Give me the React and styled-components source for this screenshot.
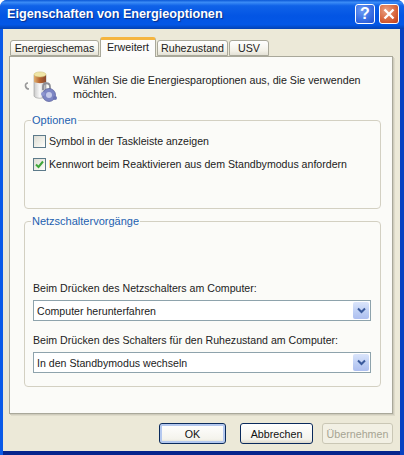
import React from 'react';
import styled, { createGlobalStyle } from 'styled-components';

const Global = createGlobalStyle`
  html, body { margin: 0; padding: 0; background: #fff; }
  * { box-sizing: border-box; }
`;
const Win = styled.div`
  width: 404px; height: 455px; display: flex; flex-direction: column; overflow: hidden;
  border-radius: 7px 7px 0 0;
  font-family: "Liberation Sans", Arial, sans-serif; font-size: 10.6px; color: #222;
  background: #0a4fd8;
`;
const TitleBar = styled.div`
  height: 29px; flex: none; display: flex; align-items: center; padding: 0 5px 1px 7px;
  background: linear-gradient(180deg, #0a57d6 0%, #3b8cf6 8%, #0f62e8 20%, #0355e4 55%, #0357e6 85%, #0342b4 100%);
`;
const Title = styled.div`
  flex: 1; color: #fff; font-weight: 700; font-size: 12.65px;
  text-shadow: 1px 1px 1px #0a2f8a;
`;
const CapButton = styled.div`
  width: 20px; height: 20px; margin-left: 4px; border: 1px solid #fff; border-radius: 3px;
  display: flex; align-items: center; justify-content: center;
  color: #fff; font-weight: 700; font-size: 16px;
  background: ${p => p.$close
    ? 'radial-gradient(circle at 35% 30%, #e9a184 0%, #d9673e 55%, #bf3c17 100%)'
    : 'radial-gradient(circle at 35% 30%, #6f9cf4 0%, #3a6fe4 55%, #2450cc 100%)'};
`;
const Outer = styled.div`
  flex: 1; display: flex; flex-direction: column; min-height: 0;
  background: linear-gradient(90deg, #0a5ae8 0 3px, transparent 3px), linear-gradient(270deg, #0842c2 0 4px, transparent 4px), linear-gradient(0deg, #06248c 0 4px, #0a4fd8 4px);
`;
const Body = styled.div`
  flex: 1; margin: 0 4px 4px 3px; background: #ece9d8; padding: 8px 7px 0 6px;
  display: flex; flex-direction: column;
`;
const TabRow = styled.div`
  display: flex; align-items: flex-end; height: 19px; padding-left: 1px; position: relative; z-index: 1;
`;
const Tab = styled.div`
  height: ${p => p.$active ? '20px' : '16px'};
  width: ${p => p.$w}px;
  margin-bottom: ${p => p.$active ? '-1px' : '0'};
  margin-right: 1px;
  display: flex; align-items: center; justify-content: center;
  font-size: 10.7px;
  padding-bottom: ${p => p.$active ? '3px' : '0'};
  border: 1px solid #a9a89a;
  border-bottom: ${p => p.$active ? '0' : '1px solid #a9a89a'};
  border-top: ${p => p.$active ? '3px solid #f5b53f' : '1px solid #a9a89a'};
  border-radius: 3px 3px 0 0;
  background: ${p => p.$active ? '#fcfcfb' : 'linear-gradient(180deg, #fff 0%, #f3f1e8 70%, #e4e2d6 100%)'};
`;
const Panel = styled.div`
  height: 358px; width: 384px; flex: none; background: #fbfbf8; border: 1px solid #a9a89a;
  box-shadow: 1px 1px 0 #cfccbd, 2px 2px 0 #dedbca;
  padding: 13px 11px 0 14px; display: flex; flex-direction: column;
`;
const Intro = styled.div`
  display: flex; gap: 15px; height: 40px; align-items: flex-start; margin-bottom: 4px;
`;
const IntroText = styled.div`
  font-size: 10.7px; line-height: 14px; padding-top: 3px; width: 300px;
`;
const Group = styled.fieldset`
  margin: 0; padding: 0 8px 0 8px; height: ${p => p.$h}px;
  margin-bottom: ${p => p.$mb || 0}px;
  border: 1px solid #d3d0c2; border-radius: 4px;
  min-width: 0;
`;
const Legend = styled.legend`
  padding: 0 1px; margin-left: -2px; font-size: 11px; color: #1d5fb0; line-height: 13px;
`;
const CheckRow = styled.div`
  display: flex; align-items: center; gap: 3px; height: 14px; margin-top: ${p => p.$mt}px;
`;
const Box = styled.div`
  width: 13px; height: 13px; border: 1px solid #5c7a8a; flex: none;
  background: linear-gradient(135deg, #dcdcd4 0%, #f4f4ee 70%, #fff 100%);
  display: flex; align-items: center; justify-content: center;
`;
const FieldLabel = styled.div`
  line-height: 13px; margin-top: ${p => p.$mt}px; margin-bottom: 5px;
`;
const Select = styled.div`
  width: 338px; height: 21px; border: 1px solid #8ea3ac; background: #fff;
  display: flex; align-items: center; justify-content: space-between;
  padding: 0 1px 0 3px;
`;
const Arrow = styled.div`
  width: 16px; height: 17px; border-radius: 2px;
  background: linear-gradient(180deg, #dbe5fb 0%, #bccdf4 60%, #aebff0 100%);
  display: flex; align-items: center; justify-content: center;
`;
const Footer = styled.div`
  flex: 1; display: flex; align-items: flex-start; justify-content: flex-end; padding-top: 9px;
`;
const Btn = styled.div`
  width: ${p => p.$w}px; height: 21px; margin-left: ${p => p.$ml}px;
  display: flex; align-items: center; justify-content: center; font-size: 10.7px;
  border: 1px solid ${p => p.$off ? '#cac7b5' : '#0a2a5c'}; border-radius: 3px;
  color: ${p => p.$off ? '#a6a493' : '#111'};
  background: ${p => p.$off ? '#f2f0e4' : 'linear-gradient(180deg, #fff 0%, #f4f3ec 80%, #dcd8ca 100%)'};
  box-shadow: ${p => p.$def ? 'inset 0 0 0 2px #b4c8ef' : 'none'};
`;

const Chevron = () => (
  <svg width="9" height="7" viewBox="0 0 9 7"><path d="M1 1.5 4.5 5 8 1.5" fill="none" stroke="#3a5a9c" strokeWidth="2" /></svg>
);

const PowerIcon = () => (
  <svg width="34" height="34" viewBox="0 0 34 34" style={{ flex: 'none', marginTop: -1 }}>
    <defs>
      <linearGradient id="can" x1="0" x2="1" y1="0" y2="0">
        <stop offset="0" stopColor="#c9c9c9" /><stop offset="0.5" stopColor="#fafafa" /><stop offset="1" stopColor="#a9a9b0" />
      </linearGradient>
      <linearGradient id="capTop" x1="0" x2="1" y1="0" y2="0">
        <stop offset="0" stopColor="#e0b070" /><stop offset="0.5" stopColor="#b5622f" /><stop offset="1" stopColor="#8a4a30" />
      </linearGradient>
    </defs>
    <path d="M4 14c-4 0-3 6 1 6" fill="none" stroke="#999" strokeWidth="1.6" />
    <path d="M10 6h12v21c-1 3-11 3-12 0z" fill="url(#can)" stroke="#999" strokeWidth=".6" />
    <path d="M10 6h12v7c-2 1.5-10 1.5-12 0z" fill="url(#capTop)" />
    <ellipse cx="16" cy="5.5" rx="6" ry="2.6" fill="#f0e6a8" stroke="#c9b96a" strokeWidth=".5" />
    <path d="M19 21v-3c0-5 7-5 7 0v3" fill="none" stroke="#8d8d95" strokeWidth="1.8" />
    <circle cx="25" cy="26" r="6.5" fill="#7d86c4" stroke="#555c98" strokeWidth=".7" />
    <circle cx="25" cy="26" r="3" fill="#c5cae9" />
    <circle cx="19" cy="25" r="2" fill="#8d95cf" />
    <circle cx="31" cy="29" r="2" fill="#6b73b4" />
  </svg>
);

export default function App() {
  return (
    <>
      <Global />
      <Win>
        <TitleBar>
          <Title>Eigenschaften von Energieoptionen</Title>
          <CapButton>?</CapButton>
          <CapButton $close>
            <svg width="12" height="12" viewBox="0 0 12 12"><path d="M1.5 1.5l9 9M10.5 1.5l-9 9" stroke="#fff" strokeWidth="2.4" /></svg>
          </CapButton>
        </TitleBar>
        <Outer>
          <Body>
            <TabRow>
              <Tab $w={89}>Energieschemas</Tab>
              <Tab $active $w={56}>Erweitert</Tab>
              <Tab $w={71}>Ruhezustand</Tab>
              <Tab $w={40}>USV</Tab>
            </TabRow>
            <Panel>
              <Intro>
                <PowerIcon />
                <IntroText>Wählen Sie die Energiesparoptionen aus, die Sie verwenden möchten.</IntroText>
              </Intro>
              <Group $h={95} $mb={6}>
                <Legend>Optionen</Legend>
                <CheckRow $mt={7}><Box />Symbol in der Taskleiste anzeigen</CheckRow>
                <CheckRow $mt={9}>
                  <Box>
                    <svg width="9" height="9" viewBox="0 0 9 9"><path d="M1 4.5 3.5 7 8 1.5" fill="none" stroke="#3fa63a" strokeWidth="2" /></svg>
                  </Box>
                  Kennwort beim Reaktivieren aus dem Standbymodus anfordern
                </CheckRow>
              </Group>
              <Group $h={172}>
                <Legend>Netzschaltervorgänge</Legend>
                <FieldLabel $mt={54}>Beim Drücken des Netzschalters am Computer:</FieldLabel>
                <Select>Computer herunterfahren<Arrow><Chevron /></Arrow></Select>
                <FieldLabel $mt={13}>Beim Drücken des Schalters für den Ruhezustand am Computer:</FieldLabel>
                <Select>In den Standbymodus wechseln<Arrow><Chevron /></Arrow></Select>
              </Group>
            </Panel>
            <Footer>
              <Btn $def $w={67}>OK</Btn>
              <Btn $w={73} $ml={14}>Abbrechen</Btn>
              <Btn $off $w={71} $ml={9}>Übernehmen</Btn>
            </Footer>
          </Body>
        </Outer>
      </Win>
    </>
  );
}
